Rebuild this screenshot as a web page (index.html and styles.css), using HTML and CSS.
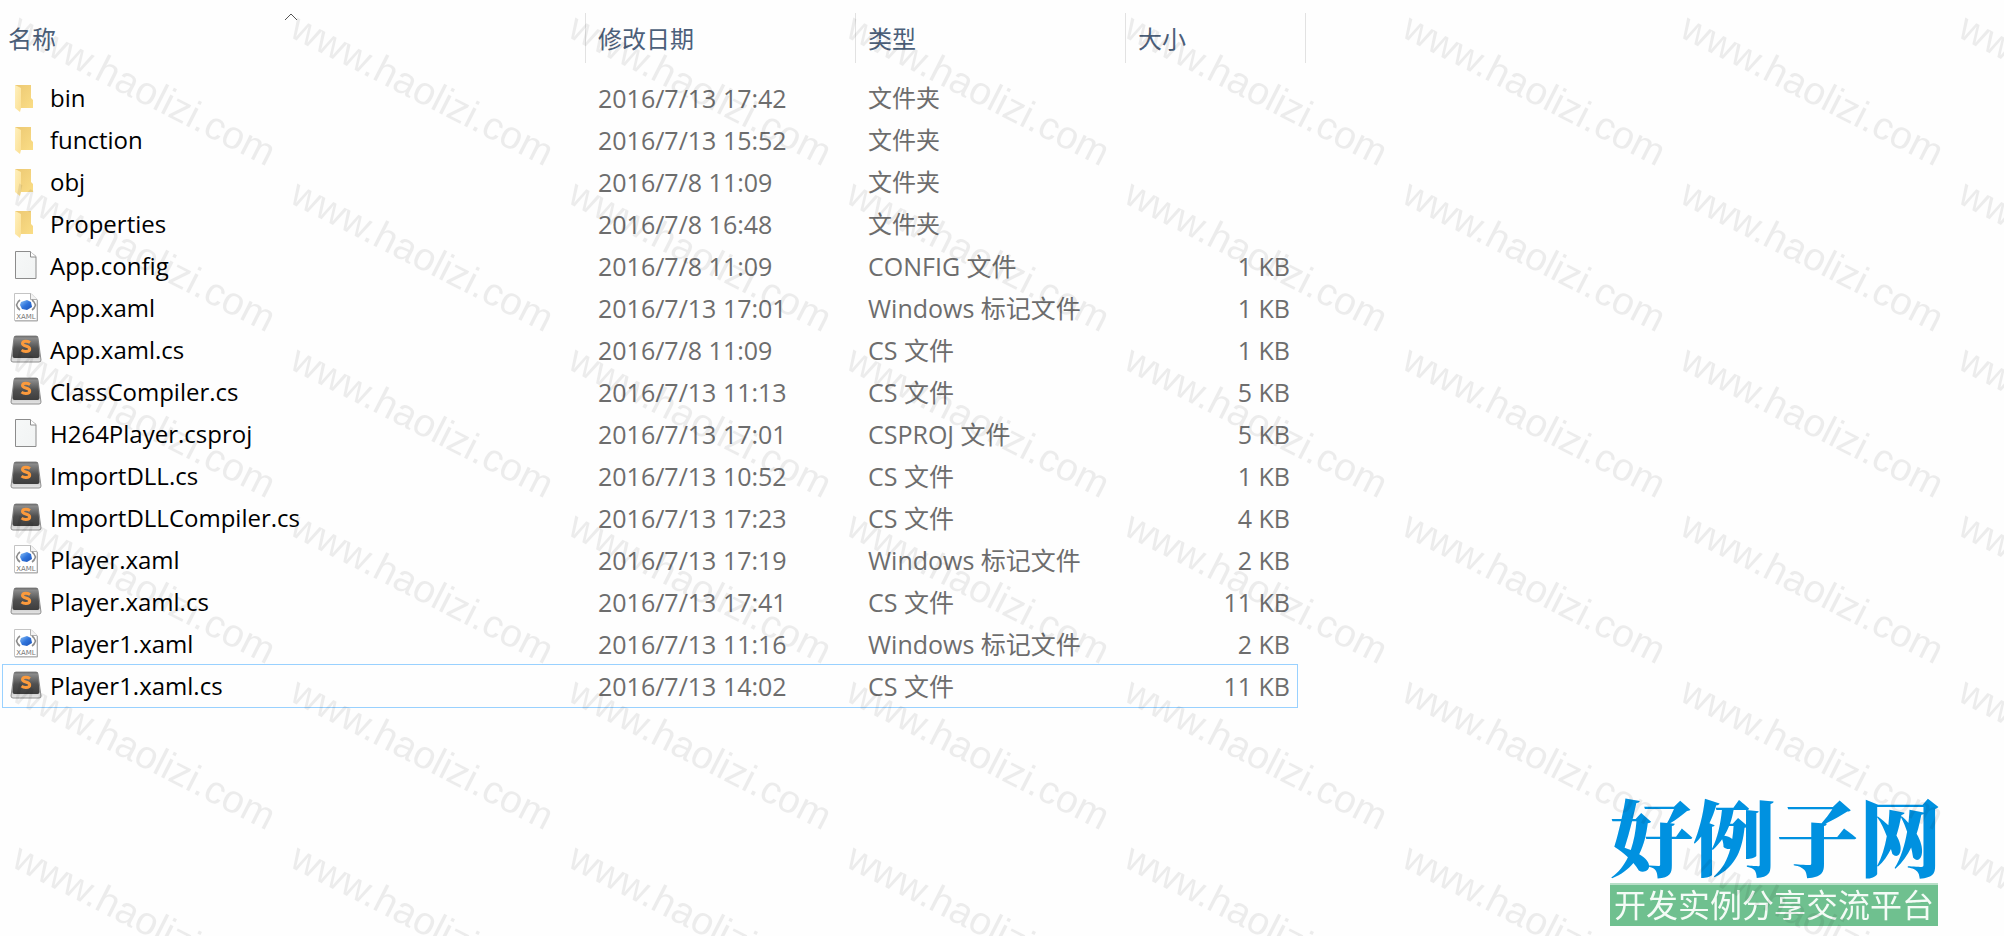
FILE: index.html
```html
<!DOCTYPE html>
<html lang="zh-CN">
<head>
<meta charset="utf-8">
<title>文件列表</title>
<link rel="stylesheet" href="styles.css">
</head>
<body>
<svg class="sprite" aria-hidden="true">
  <defs>
    <linearGradient id="folder-back" x1="0" y1="0" x2="1" y2="1"><stop offset="0" stop-color="#ecc873"/><stop offset="1" stop-color="#fadd86"/></linearGradient>
    <linearGradient id="folder-front" x1="0" y1="0" x2="1" y2="1"><stop offset="0" stop-color="#fff0bd"/><stop offset="1" stop-color="#fbdf92"/></linearGradient>
    <linearGradient id="paper" x1="0" y1="0" x2="1" y2="1"><stop offset="0" stop-color="#f6f8f8"/><stop offset="1" stop-color="#f1f3f3"/></linearGradient>
    <linearGradient id="key-top" x1="0" y1="0" x2="0" y2="1"><stop offset="0" stop-color="#6d6d6d"/><stop offset=".1" stop-color="#8b8b8b"/><stop offset=".55" stop-color="#505050"/><stop offset="1" stop-color="#3d3d3d"/></linearGradient>
    <linearGradient id="key-side" x1="0" y1="0" x2="0" y2="1"><stop offset="0" stop-color="#777"/><stop offset="1" stop-color="#e6e6e6"/></linearGradient>
    <linearGradient id="gem" x1="0" y1="0" x2="1" y2="1"><stop offset="0" stop-color="#8fc4f7"/><stop offset=".5" stop-color="#2f74dc"/><stop offset="1" stop-color="#1d52b4"/></linearGradient>
    <symbol id="folder" viewBox="0 0 32 32">
      <path d="M5 3h16v13l2 2v8H10z" fill="url(#folder-back)"/>
      <path d="M5 3l6 3v20l-1 4-5-4z" fill="url(#folder-front)"/>
    </symbol>
    <symbol id="file" viewBox="0 0 32 32">
      <path d="M5.500 1.500H20l6 5v22H5.500z" fill="url(#paper)" stroke="#8c8c8c"/>
      <path d="M20.500 1.500v5.500H26" fill="#fff" stroke="#8c8c8c"/>
    </symbol>
    <symbol id="xaml" viewBox="0 0 32 32">
      <path d="M4.500 1.500H21l6 6v21H4.500z" fill="#fff" stroke="#c4c4c4"/>
      <path d="M5 29h22.500V8" fill="none" stroke="#aaa"/>
      <path d="M20.500 1.500v6H27" fill="#f4f4f4" stroke="#b0b0b0"/>
      <path d="M10 8q-2.500 1.500-3.500 5 1 3.500 3.500 5M22 8q2.500 1.500 3.500 5-1 3.500-3.500 5" fill="none" stroke="#8c8c8c" stroke-width="1.600"/>
      <path d="M11 10l6-2 4 2 1 5-5 3-5-1-2-4z" fill="url(#gem)"/>
      <text class="xaml-label" x="16" y="26.500" text-anchor="middle">XAML</text>
    </symbol>
    <symbol id="sublime" viewBox="0 0 32 32">
      <path d="M6 2h20q2 0 2 2l3 22q0 2-2 2H3q-2 0-2-2L4 4q0-2 2-2z" fill="url(#key-side)" stroke="#777" stroke-width=".8"/>
      <path d="M6 2h20q2 0 2 2l1.500 18q0 2-2 2h-23q-2 0-2-2L4 4q0-2 2-2z" fill="url(#key-top)"/>
      <path d="M20 8.500q-2-1.200-4.200-1.200-3.300 0-3.300 2.300 0 1.600 3.300 2.400 3.900.9 3.900 3 0 2.400-3.900 2.400-2.500 0-4.300-1.300" fill="none" stroke="#fb9a3c" stroke-width="3"/>
    </symbol>
    <pattern id="watermark-tile" width="278" height="166" patternUnits="userSpaceOnUse">
      <text class="watermark-text" transform="translate(10 36) rotate(27)">www.haolizi.com</text>
    </pattern>
  </defs>
</svg>

<main class="explorer">
  <table class="files">
    <colgroup><col><col class="col-date"><col class="col-type"><col class="col-size"></colgroup>
    <thead>
      <tr>
        <th scope="col" aria-sort="ascending"><button type="button" class="sort">名称</button><svg class="caret" viewBox="0 0 14 8" aria-hidden="true"><path d="M1 7l6-6 6 6" fill="none" stroke="#555"/></svg></th>
        <th scope="col"><button type="button" class="sort">修改日期</button></th>
        <th scope="col"><button type="button" class="sort">类型</button></th>
        <th scope="col"><button type="button" class="sort">大小</button></th>
      </tr>
    </thead>
    <tbody>
      <tr><td><span class="name"><svg class="icon"><use href="#folder"/></svg>bin</span></td><td class="data">2016/7/13 17:42</td><td>文件夹</td><td class="data"></td></tr>
      <tr><td><span class="name"><svg class="icon"><use href="#folder"/></svg>function</span></td><td class="data">2016/7/13 15:52</td><td>文件夹</td><td class="data"></td></tr>
      <tr><td><span class="name"><svg class="icon"><use href="#folder"/></svg>obj</span></td><td class="data">2016/7/8 11:09</td><td>文件夹</td><td class="data"></td></tr>
      <tr><td><span class="name"><svg class="icon"><use href="#folder"/></svg>Properties</span></td><td class="data">2016/7/8 16:48</td><td>文件夹</td><td class="data"></td></tr>
      <tr><td><span class="name"><svg class="icon"><use href="#file"/></svg>App.config</span></td><td class="data">2016/7/8 11:09</td><td class="data">CONFIG 文件</td><td class="data">1 KB</td></tr>
      <tr><td><span class="name"><svg class="icon"><use href="#xaml"/></svg>App.xaml</span></td><td class="data">2016/7/13 17:01</td><td class="data">Windows 标记文件</td><td class="data">1 KB</td></tr>
      <tr><td><span class="name"><svg class="icon"><use href="#sublime"/></svg>App.xaml.cs</span></td><td class="data">2016/7/8 11:09</td><td class="data">CS 文件</td><td class="data">1 KB</td></tr>
      <tr><td><span class="name"><svg class="icon"><use href="#sublime"/></svg>ClassCompiler.cs</span></td><td class="data">2016/7/13 11:13</td><td class="data">CS 文件</td><td class="data">5 KB</td></tr>
      <tr><td><span class="name"><svg class="icon"><use href="#file"/></svg>H264Player.csproj</span></td><td class="data">2016/7/13 17:01</td><td class="data">CSPROJ 文件</td><td class="data">5 KB</td></tr>
      <tr><td><span class="name"><svg class="icon"><use href="#sublime"/></svg>ImportDLL.cs</span></td><td class="data">2016/7/13 10:52</td><td class="data">CS 文件</td><td class="data">1 KB</td></tr>
      <tr><td><span class="name"><svg class="icon"><use href="#sublime"/></svg>ImportDLLCompiler.cs</span></td><td class="data">2016/7/13 17:23</td><td class="data">CS 文件</td><td class="data">4 KB</td></tr>
      <tr><td><span class="name"><svg class="icon"><use href="#xaml"/></svg>Player.xaml</span></td><td class="data">2016/7/13 17:19</td><td class="data">Windows 标记文件</td><td class="data">2 KB</td></tr>
      <tr><td><span class="name"><svg class="icon"><use href="#sublime"/></svg>Player.xaml.cs</span></td><td class="data">2016/7/13 17:41</td><td class="data">CS 文件</td><td class="data">11 KB</td></tr>
      <tr><td><span class="name"><svg class="icon"><use href="#xaml"/></svg>Player1.xaml</span></td><td class="data">2016/7/13 11:16</td><td class="data">Windows 标记文件</td><td class="data">2 KB</td></tr>
      <tr class="focused"><td><span class="name"><svg class="icon"><use href="#sublime"/></svg>Player1.xaml.cs</span></td><td class="data">2016/7/13 14:02</td><td class="data">CS 文件</td><td class="data">11 KB</td></tr>
    </tbody>
  </table>
</main>

<aside class="brand">
  <div class="brand-name">好例子网</div>
  <div class="brand-slogan">开发实例分享交流平台</div>
</aside>

<svg class="watermark" aria-hidden="true"><rect width="100%" height="100%" fill="url(#watermark-tile)"/></svg>
</body>
</html>
```
FILE: styles.css
```css
* { box-sizing: border-box; }

body {
  margin: 0;
  min-height: 100vh;
  background: #fefefe;
  color: #6d6d6d;
  font: 24px/42px "Open Sans", "Noto Sans CJK SC", sans-serif;
}

.sprite { position: absolute; width: 0; height: 0; }

.explorer { padding-top: 13px; }

.files {
  width: 100%;
  max-width: 1306px;
  table-layout: fixed;
  border-collapse: separate;
  border-spacing: 0;
}
.col-date, .col-type { width: 270px; }
.col-size { width: 180px; }

th {
  position: relative;
  height: 64px;
  padding: 0;
  text-align: left;
  vertical-align: top;
}
.sort {
  display: block;
  width: 100%;
  height: 50px;
  padding: 2px 0 0 12px;
  border: 0;
  border-right: 1px solid #e2e2e2;
  background: none;
  color: #4c607a;
  font: 24px/46px "Open Sans", "Noto Sans CJK SC", sans-serif;
  text-align: left;
}
th:first-child .sort { padding-left: 8px; }
.caret {
  position: absolute;
  top: 0;
  left: 50%;
  width: 14px;
  height: 8px;
  margin-left: -9px;
}

tbody tr { position: relative; }
td {
  height: 42px;
  padding: 0 12px;
  white-space: nowrap;
}
td:first-child { padding-left: 10px; color: #000; }
td:last-child { padding-right: 16px; text-align: right; }
.data { font-size: 25px; }

.name { display: flex; align-items: center; gap: 8px; }
.icon { flex: none; width: 32px; height: 32px; }
.xaml-label { font: 7px "DejaVu Sans", sans-serif; fill: #777; }

.focused td:last-child::after {
  content: "";
  position: absolute;
  inset: -1px 8px -1px 2px;
  border: 1px solid #99d1ff;
}

.brand {
  position: fixed;
  right: 66px;
  bottom: 10px;
  color: #0091e0;
  white-space: nowrap;
}
.brand-name {
  font: 900 83px/98px "Noto Serif CJK SC", "Noto Sans CJK SC", serif;
  margin-right: -4px;
}
.brand-slogan {
  width: 328px;
  padding: 0 4px 5px;
  border-top: 2px solid #b7dfc7;
  background: #6fc08f;
  color: #f4fbf6;
  font: 32px/36px "Noto Sans CJK SC", sans-serif;
}

.watermark {
  position: fixed;
  inset: 0;
  width: 100%;
  height: 100%;
  pointer-events: none;
}
.watermark-text {
  font: 39px "Liberation Sans", Arial, sans-serif;
  fill: #000;
  fill-opacity: .07;
}
```
